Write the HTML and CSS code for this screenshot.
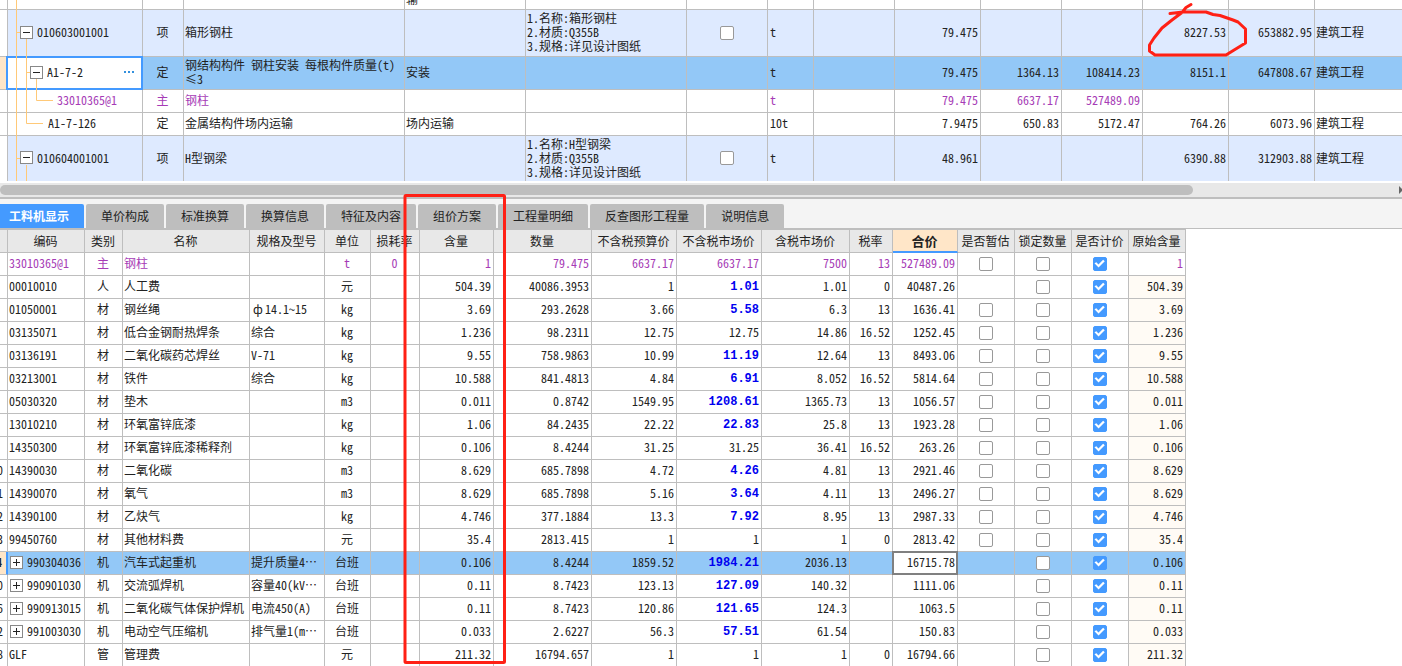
FILE: index.html
```html
<!DOCTYPE html>
<html lang="zh-CN">
<head>
<meta charset="utf-8">
<title>工程计价</title>
<link rel="stylesheet" href="styles.css">
</head>
<body>
<main class="app">
  <section class="items">
    <table class="grid items-grid">
      <colgroup>
        <col class="w8"><col class="w135"><col class="w41"><col class="w221"><col class="w121"><col class="w161"><col class="w81"><col class="w46"><col class="w81"><col class="w86"><col class="w81"><col class="w81"><col class="w86"><col class="w86"><col>
      </colgroup>
      <tbody>
        <tr class="cut"><td></td><td></td><td></td><td></td><td><div class="tail">输</div></td><td></td><td></td><td></td><td></td><td></td><td></td><td></td><td></td><td></td><td></td></tr>
        <tr class="item">
          <td class="gutter"></td>
          <td><div class="node level1"><button class="toggle minus" type="button" aria-label="折叠"></button>010603001001</div></td>
          <td class="c">项</td><td>箱形钢柱</td><td></td>
          <td>1.名称:箱形钢柱<br>2.材质:Q355B<br>3.规格:详见设计图纸</td>
          <td class="c"><input type="checkbox" aria-label="选项 010603001001"></td>
          <td class="unit">t</td><td></td><td class="n">79.475</td><td></td><td></td><td class="n">8227.53</td><td class="n">653882.95</td><td>建筑工程</td>
        </tr>
        <tr class="quota selected">
          <td class="gutter"></td>
          <td class="editing"><div class="node level2"><button class="toggle minus" type="button" aria-label="折叠"></button>A1-7-2<button class="more" type="button" aria-label="更多"><i></i><i></i><i></i></button></div></td>
          <td class="c">定</td><td>钢结构构件 钢柱安装 每根构件质量(t)<br>≤3</td><td>安装</td><td></td><td></td>
          <td class="unit">t</td><td></td><td class="n">79.475</td><td class="n">1364.13</td><td class="n">108414.23</td><td class="n">8151.1</td><td class="n">647808.67</td><td>建筑工程</td>
        </tr>
        <tr class="main">
          <td class="gutter"></td>
          <td><div class="node level3">33010365@1</div></td>
          <td class="c">主</td><td>钢柱</td><td></td><td></td><td></td>
          <td class="unit">t</td><td></td><td class="n">79.475</td><td class="n">6637.17</td><td class="n">527489.09</td><td></td><td></td><td></td>
        </tr>
        <tr>
          <td class="gutter"></td>
          <td><div class="node leaf2">A1-7-126</div></td>
          <td class="c">定</td><td>金属结构件场内运输</td><td>场内运输</td><td></td><td></td>
          <td class="unit">10t</td><td></td><td class="n">7.9475</td><td class="n">650.83</td><td class="n">5172.47</td><td class="n">764.26</td><td class="n">6073.96</td><td>建筑工程</td>
        </tr>
        <tr class="item last">
          <td class="gutter"></td>
          <td><div class="node level1"><button class="toggle minus" type="button" aria-label="折叠"></button>010604001001</div></td>
          <td class="c">项</td><td>H型钢梁</td><td></td>
          <td>1.名称:H型钢梁<br>2.材质:Q355B<br>3.规格:详见设计图纸</td>
          <td class="c"><input type="checkbox" aria-label="选项 010604001001"></td>
          <td class="unit">t</td><td></td><td class="n">48.961</td><td></td><td></td><td class="n">6390.88</td><td class="n">312903.88</td><td>建筑工程</td>
        </tr>
      </tbody>
    </table>
    <svg class="branches" width="60" height="181" viewBox="0 0 60 181" aria-hidden="true">
      <path d="M16.5 0V181M16.5 32.5H20M26.5 39V123.5H43M26.5 72.5H30M36.5 79V100.5H53M16.5 158.5H20M26.5 165V181"/>
    </svg>
  </section>
  <div class="scrollbar"><div class="thumb"></div><svg class="arrow" width="3" height="8" viewBox="0 0 3 8" aria-hidden="true"><path d="M0 0L4 4L0 8Z"/></svg></div>
  <nav class="tabs">
    <button class="tab active" type="button">工料机显示</button>
    <button class="tab" type="button">单价构成</button>
    <button class="tab" type="button">标准换算</button>
    <button class="tab" type="button">换算信息</button>
    <button class="tab" type="button">特征及内容</button>
    <button class="tab" type="button">组价方案</button>
    <button class="tab" type="button">工程量明细</button>
    <button class="tab" type="button">反查图形工程量</button>
    <button class="tab" type="button">说明信息</button>
  </nav>
  <section class="detail">
    <table class="grid detail-grid">
      <colgroup>
        <col class="w8"><col class="w77"><col class="w38"><col class="w127"><col class="w75"><col class="w46"><col class="w49"><col class="w74"><col class="w98"><col class="w85"><col class="w85"><col class="w88"><col class="w43"><col class="w65"><col class="w57"><col class="w57"><col class="w57"><col class="w57">
      </colgroup>
      <thead>
        <tr><th></th><th>编码</th><th>类别</th><th>名称</th><th>规格及型号</th><th>单位</th><th>损耗率</th><th>含量</th><th>数量</th><th>不含税预算价</th><th>不含税市场价</th><th>含税市场价</th><th>税率</th><th class="current">合价</th><th>是否暂估</th><th>锁定数量</th><th>是否计价</th><th>原始含量</th></tr>
      </thead>
      <tbody id="resources"></tbody>
    </table>
  </section>
  <svg class="marks" width="1402" height="666" viewBox="0 0 1402 666" aria-hidden="true">
    <rect x="405" y="195.500" width="99.500" height="467" rx="1"/>
    <path d="M1170 13.500L1183 12H1206L1213 14.500L1220 15.500L1233 20L1238 22L1245.500 29V43L1239 47L1226 55H1155L1149.500 51V45L1154 38L1162 28L1172 20L1182 12.500L1186 7.500L1191 4.500"/>
  </svg>
</main>
<script src="app.js"></script>
</body>
</html>
```
FILE: styles.css
```css
* { box-sizing: border-box; }
body {
  margin: 0;
  background: #fff;
  color: #222;
  font: 12px/14px "Noto Sans Mono CJK SC", "Noto Sans CJK SC", monospace;
}
button { padding: 0; border: 0; font: inherit; color: inherit; }
.app { position: relative; height: 100vh; overflow: hidden; display: flex; flex-direction: column; }

.grid { table-layout: fixed; border-collapse: separate; border-spacing: 0; }
.grid td, .grid th {
  height: 23px;
  padding: 0 2px 2px 1px;
  border-right: 1px solid #bebebe;
  border-bottom: 1px solid #bebebe;
  font-weight: 400;
  text-align: left;
  white-space: nowrap;
  overflow: hidden;
}
.w8 { width: 8px; } .w38 { width: 38px; } .w41 { width: 41px; } .w43 { width: 43px; }
.w46 { width: 46px; } .w49 { width: 49px; } .w57 { width: 57px; } .w65 { width: 65px; }
.w74 { width: 74px; } .w75 { width: 75px; } .w77 { width: 77px; } .w81 { width: 81px; }
.w85 { width: 85px; } .w86 { width: 86px; } .w88 { width: 88px; } .w98 { width: 98px; }
.w121 { width: 121px; } .w127 { width: 127px; } .w135 { width: 135px; }
.w161 { width: 161px; } .w221 { width: 221px; }
.grid .c { text-align: center; padding: 0 1px 2px 0; }
.grid .n { text-align: right; }
.grid .unit { padding-left: 2px; }
.grid .main { color: #a63bb6; }
.grid .selected td { background: #93c8f7; }
.grid .gutter { padding: 0 0 2px; background: #fff; }
.grid .selected .gutter { background: #ffe6c8; }

.items { position: relative; flex: none; overflow: hidden; }
.items-grid { width: 100%; }
.items-grid .cut td { height: 10px; padding-bottom: 0; }
.tail { height: 9px; display: flex; align-items: flex-end; padding-bottom: 3px; overflow: hidden; }
.items-grid .item td { height: 47px; }
.items-grid .item td:not(.gutter) { background: #deeaff; }
.items-grid .last td { height: 45px; border-bottom: 0; }
.items-grid .quota td { height: 33px; }
.items-grid td:last-child { border-right: 0; }
.items-grid .editing { position: relative; overflow: visible; }
.items-grid .selected .editing { background: #fff; }
.editing::after { content: ""; position: absolute; inset: -1px -1px -1px -2px; border: 2px solid #449aff; pointer-events: none; }
.node { display: flex; align-items: center; gap: 4px; }
.level1 { padding-left: 11px; }
.level2 { padding-left: 21px; }
.level3 { padding-left: 48px; }
.leaf2 { padding-left: 39px; }
.branches { position: absolute; left: 0; top: 0; z-index: 1; fill: none; stroke: #ffc978; pointer-events: none; }
.toggle {
  position: relative; z-index: 2; flex: none;
  width: 13px; height: 13px;
  border: 1px solid #888;
  background: linear-gradient(#222, #222) center / 7px 1px no-repeat #fff;
}
.toggle.plus { margin-left: 1px; background: linear-gradient(#222, #222) center / 7px 1px no-repeat, linear-gradient(#222, #222) center / 1px 7px no-repeat #fff; }
.more { display: flex; gap: 2px; margin-left: auto; padding: 4px 6px 4px 0; background: none; }
.more i { width: 2px; height: 2px; background: #3390dd; }

input[type="checkbox"] {
  appearance: none; position: relative; display: block;
  width: 14px; height: 14px; margin: 1px auto 0;
  border: 1px solid #999; border-radius: 2px; background: #fff;
}
input[type="checkbox"]:checked { border-color: #449aff; background: #449aff; }
input[type="checkbox"]:checked::before {
  content: ""; position: absolute; inset: 0; background: #fff;
  clip-path: polygon(8% 48%, 24% 40%, 41% 59%, 80% 19%, 94% 31%, 42% 84%);
}

.scrollbar { flex: none; display: flex; align-items: center; justify-content: space-between; height: 14px; margin-top: 2px; background: #e8e8e8; }
.thumb { width: 85.1%; height: 10px; border-radius: 5px; background: #bebebe; }
.arrow { fill: #666; }

.tabs { flex: none; display: flex; gap: 2px; height: 32px; padding-top: 5px; border-top: 2px solid #bebebe; border-bottom: 1px solid #bebebe; background: #f4f4f4; }
.tab { padding: 0 15px; border-radius: 2px 2px 0 0; background: #bebebe; font-family: "Noto Sans CJK SC", sans-serif; }
.tab.active { padding-left: 9px; border-radius: 0 2px 0 0; background: #449aff; color: #fff; font-weight: 700; }

.detail { flex: 1; min-height: 0; overflow: hidden; }
.detail-grid { width: 1186px; }
.detail-grid th { height: 24px; padding: 0 1px 0 0; border-top: 1px solid #bebebe; background: #e8e8e8; text-align: center; }
.detail-grid .current { border-bottom: 2px solid #449aff; background: #ffe6c8; font-weight: 700; font-size: 13px; }
.detail-grid .gutter div { display: flex; justify-content: flex-end; padding-right: 4px; overflow: hidden; }
.detail-grid .selected .gutter { border-right: 2px solid #449aff; font-weight: 700; }
.detail-grid .origin { background: #fffbf5; }
.detail-grid .changed { padding-bottom: 0; color: #0000f0; font: 700 12px/14px "Liberation Mono", monospace; }
.detail-grid .selected .focus { position: relative; background: #fff; overflow: visible; }
.focus::after { content: ""; position: absolute; inset: -1px; border: 2px solid #808080; pointer-events: none; }
.symbol { display: inline-block; width: 14px; text-align: center; }

.marks { position: absolute; left: 0; top: 0; z-index: 3; fill: none; stroke: #ff2015; stroke-width: 3; stroke-linejoin: round; stroke-linecap: round; pointer-events: none; }
```
FILE: app.js
```javascript
// no, code, kind, name, spec, unit, loss, content, quantity, budget, market, taxed, rate, total
// A leading "*" marks an adjusted price.
const rows = `
|33010365@1|主|钢柱||t|0|1|79.475|6637.17|6637.17|7500|13|527489.09
|00010010|人|人工费||元||504.39|40086.3953|1|*1.01|1.01|0|40487.26
|01050001|材|钢丝绳|<span class="symbol">ф</span>14.1~15|kg||3.69|293.2628|3.66|*5.58|6.3|13|1636.41
|03135071|材|低合金钢耐热焊条|综合|kg||1.236|98.2311|12.75|12.75|14.86|16.52|1252.45
|03136191|材|二氧化碳药芯焊丝|V-71|kg||9.55|758.9863|10.99|*11.19|12.64|13|8493.06
|03213001|材|铁件|综合|kg||10.588|841.4813|4.84|*6.91|8.052|16.52|5814.64
|05030320|材|垫木||m3||0.011|0.8742|1549.95|*1208.61|1365.73|13|1056.57
|13010210|材|环氧富锌底漆||kg||1.06|84.2435|22.22|*22.83|25.8|13|1923.28
|14350300|材|环氧富锌底漆稀释剂||kg||0.106|8.4244|31.25|31.25|36.41|16.52|263.26
10|14390030|材|二氧化碳||m3||8.629|685.7898|4.72|*4.26|4.81|13|2921.46
11|14390070|材|氧气||m3||8.629|685.7898|5.16|*3.64|4.11|13|2496.27
12|14390100|材|乙炔气||kg||4.746|377.1884|13.3|*7.92|8.95|13|2987.33
13|99450760|材|其他材料费||元||35.4|2813.415|1|1|1|0|2813.42
14|990304036|机|汽车式起重机|提升质量4…|台班||0.106|8.4244|1859.52|*1984.21|2036.13||16715.78
20|990901030|机|交流弧焊机|容量40(kV…|台班||0.11|8.7423|123.13|*127.09|140.32||1111.06
26|990913015|机|二氧化碳气体保护焊机|电流450(A)|台班||0.11|8.7423|120.86|*121.65|124.3||1063.5
32|991003030|机|电动空气压缩机|排气量1(m…|台班||0.033|2.6227|56.3|*57.51|61.54||150.83
38|GLF|管|管理费||元||211.32|16794.657|1|1|1|0|16794.66
`.trim().split("\n").map(line => line.split("|"));

const box = (label, on) => `<td class="c"><input type="checkbox" aria-label="${label}"${on ? " checked" : ""}></td>`;

document.getElementById("resources").innerHTML = rows.map(r => {
  const [no, code, kind, name, spec, unit, loss, content, quantity, budget, market, taxed, rate, total] = r;
  const machine = kind === "机";
  const main = kind === "主";
  const selected = no === "14";
  const provisional = main || kind === "材";
  const changed = market.startsWith("*");
  const toggle = machine ? '<button class="toggle plus" type="button" aria-label="展开"></button>' : "";
  return `<tr class="${main ? "main" : ""}${selected ? "selected" : ""}">
    <td class="gutter"><div>${no}</div></td>
    <td><div class="node">${toggle}${code}</div></td>
    <td class="c">${kind}</td><td>${name}</td><td>${spec}</td><td class="c">${unit}</td>
    ${[loss, content, quantity, budget].map((v, i) => `<td class="${i ? "n" : "c"}">${v}</td>`).join("")}
    <td class="n${changed ? " changed" : ""}">${market.replace("*", "")}</td>
    <td class="n">${taxed}</td><td class="n">${rate}</td>
    <td class="n${selected ? " focus" : ""}">${total}</td>
    ${provisional ? box("是否暂估 " + code) : "<td></td>"}${box("锁定数量 " + code)}${box("是否计价 " + code, true)}
    <td class="n${main ? "" : " origin"}">${content}</td></tr>`;
}).join("");
```
